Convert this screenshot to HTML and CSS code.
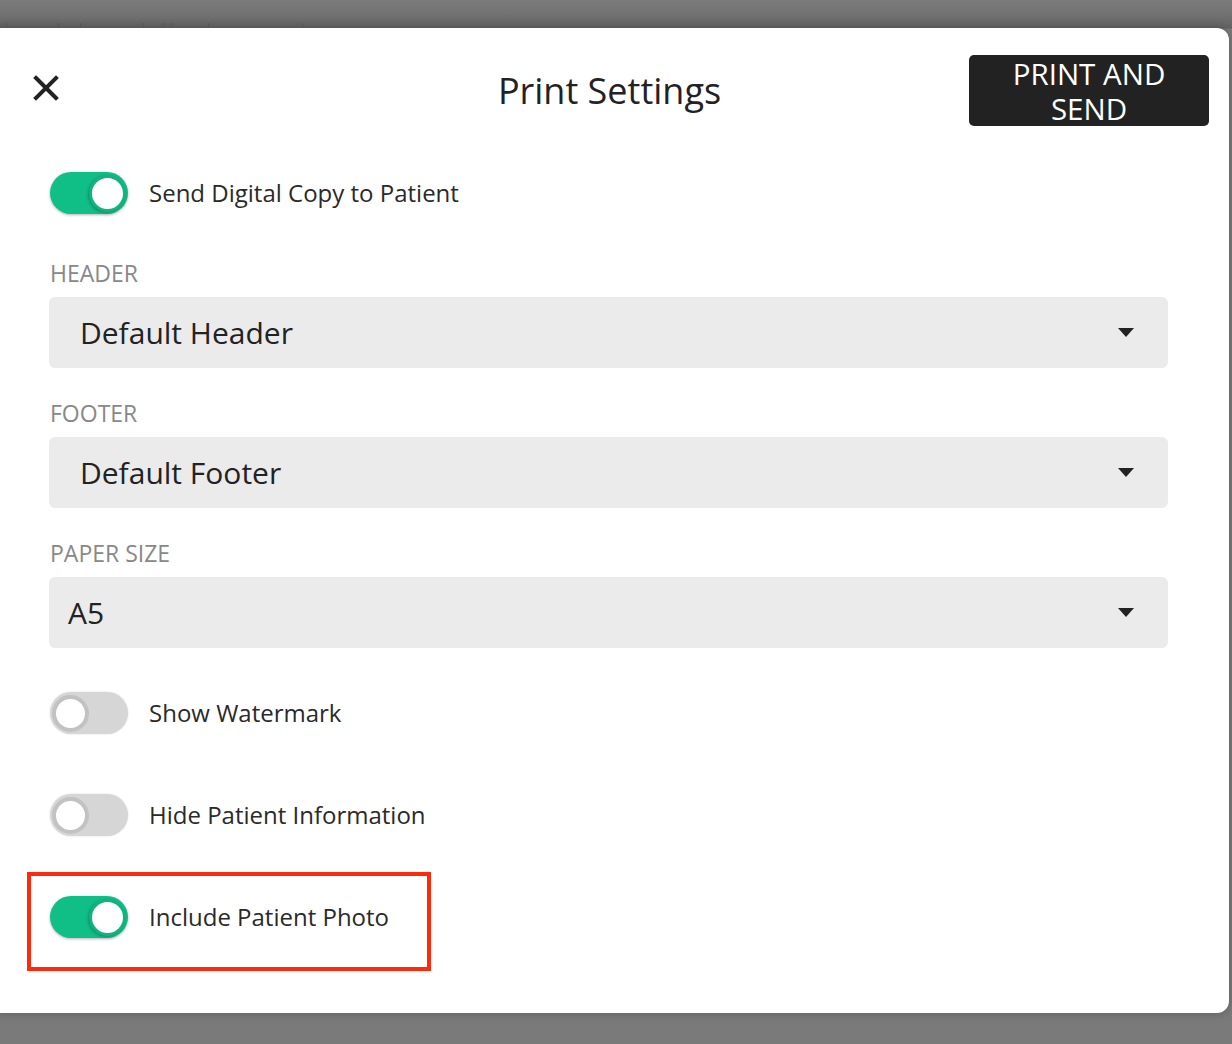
FILE: index.html
```html
<!DOCTYPE html>
<html lang="en">
<head>
<meta charset="utf-8">
<title>Print Settings</title>
<link rel="stylesheet" href="styles.css">
</head>
<body>
<div class="backdrop">
  <div class="ticks"><i style="left:6px"></i><i style="left:58px"></i><i style="left:80px"></i><i style="left:143px"></i><i style="left:163px"></i><i style="left:171px"></i><i style="left:208px"></i><i style="left:302px"></i></div>
  <div class="modal">
    <div class="modal-header">
      <div class="header-left">
        <button class="close" aria-label="Close">
          <svg width="26" height="26" viewBox="0 0 26 26"><path d="M3 3 L23 23 M23 3 L3 23" stroke="#222" stroke-width="4" stroke-linecap="square"/></svg>
        </button>
      </div>
      <h1 class="title">Print Settings</h1>
      <div class="header-right">
        <button class="primary"><span class="line">PRINT AND</span><span class="line">SEND</span></button>
      </div>
    </div>
    <div class="modal-body">
      <div class="toggle-row first">
        <span class="toggle on"><span class="knob"></span></span>
        <span class="toggle-label">Send Digital Copy to Patient</span>
      </div>

      <div class="field first-field">
        <div class="field-label">HEADER</div>
        <div class="select"><span class="select-value">Default Header</span><span class="caret"></span></div>
      </div>
      <div class="field">
        <div class="field-label">FOOTER</div>
        <div class="select"><span class="select-value">Default Footer</span><span class="caret"></span></div>
      </div>
      <div class="field">
        <div class="field-label">PAPER SIZE</div>
        <div class="select"><span class="select-value tight">A5</span><span class="caret"></span></div>
      </div>

      <div class="toggle-row after-fields">
        <span class="toggle"><span class="knob"></span></span>
        <span class="toggle-label">Show Watermark</span>
      </div>
      <div class="toggle-row spaced">
        <span class="toggle"><span class="knob"></span></span>
        <span class="toggle-label">Hide Patient Information</span>
      </div>
      <div class="toggle-row spaced">
        <span class="toggle on"><span class="knob"></span></span>
        <span class="toggle-label">Include Patient Photo</span>
        <span class="highlight-box"></span>
      </div>
    </div>
  </div>
</div>
</body>
</html>
```

FILE: styles.css
```css
* { box-sizing: border-box; }

html, body {
  margin: 0;
  padding: 0;
  height: 100%;
}

body {
  font-family: "Open Sans", "Liberation Sans", sans-serif;
  background: #7a7a7a;
  overflow: hidden;
}

.backdrop {
  position: relative;
  height: 1044px;
  padding-top: 28px;
  background: linear-gradient(to bottom, #7b7b7b 0px, #747474 12px, #636363 28px, #7a7a7a 29px, #7a7a7a 100%);
}

.ticks i {
  position: absolute;
  top: 23px;
  width: 1px;
  height: 5px;
  background: #555;
}

.modal {
  margin-left: -12px;
  width: 1241px;
  height: 985px;
  background: #fff;
  border-radius: 12px;
  box-shadow: 0 0 10px rgba(0, 0, 0, 0.25);
}

.modal-header {
  display: grid;
  grid-template-columns: 1fr auto 1fr;
  align-items: center;
  padding: 27px 20px 0 45px;
  height: 98px;
}

.header-left { display: flex; }
.header-right { display: flex; justify-content: flex-end; }

.close {
  width: 26px;
  height: 26px;
  padding: 0;
  border: 0;
  background: none;
  display: flex;
  margin-top: -5px;
}

.title {
  margin: 0;
  padding-right: 23px;
  font-size: 36px;
  font-weight: 400;
  color: #222;
  line-height: 1.2;
}

.primary {
  width: 240px;
  height: 71px;
  background: #222;
  color: #fff;
  border: 0;
  border-radius: 5px;
  font-family: "Open Sans", "Liberation Sans", sans-serif;
  font-size: 29.5px;
  font-weight: 400;
  padding: 1px 0 0;
  display: flex;
  flex-direction: column;
  align-items: center;
  justify-content: center;
}

.primary .line {
  display: block;
  height: 35px;
  line-height: 35px;
}

.modal-body {
  padding: 0 61px 0 61px;
}

.toggle-row {
  display: flex;
  align-items: center;
  gap: 21px;
  height: 42px;
  position: relative;
}

.toggle-row.first { margin-top: 46px; }
.toggle-row.after-fields { margin-top: 44px; }
.toggle-row.spaced { margin-top: 60px; }

.toggle {
  position: relative;
  width: 78px;
  height: 42px;
  border-radius: 21px;
  background: #d6d6d6;
  margin-left: 1px;
  flex: none;
  box-shadow: 0 0 2px rgba(0, 0, 0, 0.15);
}

.toggle.on {
  background: #0fbf86;
  box-shadow: 0 1px 3px rgba(0, 0, 0, 0.3);
}

.knob {
  position: absolute;
  top: 3px;
  left: 2px;
  width: 37px;
  height: 37px;
  border-radius: 50%;
  background: #fff;
  border: 4px solid #c2c2c2;
}

.toggle.on .knob {
  left: auto;
  right: 2px;
  border: 3px solid #14b27f;
  box-shadow: -1px 1px 3px rgba(0, 0, 0, 0.25);
}

.toggle-label {
  font-size: 24px;
  color: #2a2a2a;
  line-height: 30px;
}

.field.first-field { margin-top: 47px; }
.field { margin-top: 33px; }

.field-label {
  font-size: 23px;
  line-height: 24px;
  color: #888;
  padding-left: 1px;
}

.select {
  margin-top: 12px;
  height: 71px;
  background: #ebebeb;
  border-radius: 6px;
  display: flex;
  align-items: center;
  justify-content: space-between;
  padding: 0 34px 0 31px;
}

.select-value {
  font-size: 30px;
  color: #222;
}

.select-value.tight { margin-left: -12px; }

.caret {
  width: 0;
  height: 0;
  border-left: 8px solid transparent;
  border-right: 8px solid transparent;
  border-top: 9px solid #222;
}

.highlight-box {
  position: absolute;
  left: -22px;
  top: -24px;
  width: 404px;
  height: 99px;
  border: 4px solid #ff2a0a;
  pointer-events: none;
}
```
